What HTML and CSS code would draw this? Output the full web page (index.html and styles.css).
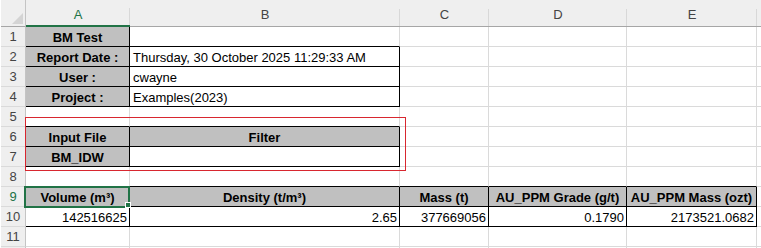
FILE: index.html
```
<!DOCTYPE html>
<html lang="en">
<head>
    <meta charset="UTF-8">
    <meta name="viewport" content="width=device-width, initial-scale=1.0">
    <title>BM Test</title>
    <link rel="stylesheet" href="styles.css">
</head>
<body>
    <div class="app">
        <div class="frame-edge"></div>
        <div class="window">
            <div class="sheet">
                <!-- column headers -->
                <div class="corner"><span class="select-all"></span></div>
                <div class="col-head active">A</div>
                <div class="col-head">B</div>
                <div class="col-head">C</div>
                <div class="col-head">D</div>
                <div class="col-head">E</div>
                <div class="col-head"></div>

                <!-- report info -->
                <div class="row-head">1</div>
                <div class="cell label br bb">BM Test</div>
                <div class="cell bb"></div>
                <div class="cell"></div><div class="cell"></div><div class="cell"></div><div class="cell"></div>

                <div class="row-head">2</div>
                <div class="cell label br bb">Report Date :</div>
                <div class="cell br bb">Thursday, 30 October 2025 11:29:33 AM</div>
                <div class="cell"></div><div class="cell"></div><div class="cell"></div><div class="cell"></div>

                <div class="row-head">3</div>
                <div class="cell label br bb">User :</div>
                <div class="cell br bb">cwayne</div>
                <div class="cell"></div><div class="cell"></div><div class="cell"></div><div class="cell"></div>

                <div class="row-head">4</div>
                <div class="cell label br bb">Project :</div>
                <div class="cell br bb">Examples(2023)</div>
                <div class="cell"></div><div class="cell"></div><div class="cell"></div><div class="cell"></div>

                <div class="row-head">5</div>
                <div class="cell bb"></div>
                <div class="cell bb"></div>
                <div class="cell"></div><div class="cell"></div><div class="cell"></div><div class="cell"></div>

                <!-- input / filter -->
                <div class="row-head">6</div>
                <div class="cell label br bb">Input File</div>
                <div class="cell label br bb">Filter</div>
                <div class="cell"></div><div class="cell"></div><div class="cell"></div><div class="cell"></div>

                <div class="row-head">7</div>
                <div class="cell label br bb">BM_IDW</div>
                <div class="cell br bb"></div>
                <div class="cell"></div><div class="cell"></div><div class="cell"></div><div class="cell"></div>

                <div class="row-head">8</div>
                <div class="cell bb"></div>
                <div class="cell bb"></div>
                <div class="cell bb"></div>
                <div class="cell bb"></div>
                <div class="cell bb"></div>
                <div class="cell"></div>

                <!-- results -->
                <div class="row-head current">9</div>
                <div class="cell label br bb">Volume (m³)</div>
                <div class="cell label br bb">Density (t/m³)</div>
                <div class="cell label br bb">Mass (t)</div>
                <div class="cell label br bb">AU_PPM Grade (g/t)</div>
                <div class="cell label br bb">AU_PPM Mass (ozt)</div>
                <div class="cell"></div>

                <div class="row-head">10</div>
                <div class="cell num br bb">142516625</div>
                <div class="cell num br bb">2.65</div>
                <div class="cell num br bb">377669056</div>
                <div class="cell num br bb">0.1790</div>
                <div class="cell num br bb">2173521.0682</div>
                <div class="cell"></div>

                <div class="row-head">11</div>
                <div class="cell"></div><div class="cell"></div><div class="cell"></div><div class="cell"></div><div class="cell"></div><div class="cell"></div>

                <!-- next row, only its top edge shows -->
                <div class="row-head"></div>
                <div class="cell"></div><div class="cell"></div><div class="cell"></div><div class="cell"></div><div class="cell"></div><div class="cell"></div>
            </div>

            <!-- outline of the input group shape -->
            <div class="shape"></div>

            <!-- active cell -->
            <div class="selection"><span class="handle"></span></div>
        </div>
    </div>
</body>
</html>
```

FILE: styles.css
```
body {
    margin: 0;
    background-color: #ffffff;
    font-family: "Liberation Sans", Arial, sans-serif;
    font-size: 13px;
    color: #000000;
    overflow: hidden;
}
.app {
    display: flex;
    height: 248px;
    overflow: hidden;
}
.frame-edge {
    width: 1px;
    margin-left: 1px;
    background-color: #1e7145;
}
.window {
    flex: 1;
    position: relative;
}
.sheet {
    display: grid;
    grid-template-columns: 25px 104px 270px 89px 138px 130px 1fr;
    grid-template-rows: 27px;
    grid-auto-rows: 20px;
}
.sheet > div {
    box-sizing: border-box;
}

/* headers */
.corner {
    background-color: #efefef;
    border-right: 1px solid #c4c4c4;
    border-bottom: 1px solid #a6a6a6;
    display: flex;
    align-items: flex-end;
    justify-content: flex-end;
    padding: 0 2px 2px 0;
}
.select-all {
    width: 0;
    height: 0;
    border-left: 11px solid transparent;
    border-bottom: 11px solid #d4d4d4;
}
.col-head {
    background: linear-gradient(#d8d8d8, #d8d8d8) right bottom / 1px 17px no-repeat, #efefef;
    border-bottom: 1px solid #a6a6a6;
    color: #444444;
    text-align: center;
    line-height: 27px;
    padding-top: 1px;
}
.col-head.active {
    color: #217346;
    border-bottom: 2px solid #217346;
}
.row-head {
    background-color: #efefef;
    border-right: 1px solid #c4c4c4;
    border-bottom: 1px solid #dadada;
    color: #444444;
    text-align: center;
    line-height: 20px;
}
.row-head.current {
    color: #217346;
}

/* cells */
.cell {
    border-right: 1px solid #dadada;
    border-bottom: 1px solid #dadada;
    padding: 1px 3px 0 3px;
    line-height: 19px;
    white-space: nowrap;
    overflow: hidden;
}
.cell.label {
    background-color: #c0c0c0;
    font-weight: bold;
    text-align: center;
}
.cell.num {
    text-align: right;
    padding-right: 2px;
}
.cell.br {
    border-right-color: #000000;
}
.cell.bb {
    border-bottom-color: #000000;
}

/* overlays */
.shape {
    position: absolute;
    left: 24px;
    top: 117px;
    width: 381px;
    height: 54px;
    box-sizing: border-box;
    border: 1px solid #d8272f;
}
.selection {
    position: absolute;
    left: 23px;
    top: 186px;
    width: 106px;
    height: 22px;
    box-sizing: border-box;
    border: 2px solid #217346;
}
.handle {
    position: absolute;
    left: 99px;
    top: 14px;
    width: 6px;
    height: 6px;
    box-sizing: border-box;
    background-color: #217346;
    border: 1px solid #ffffff;
}
```
